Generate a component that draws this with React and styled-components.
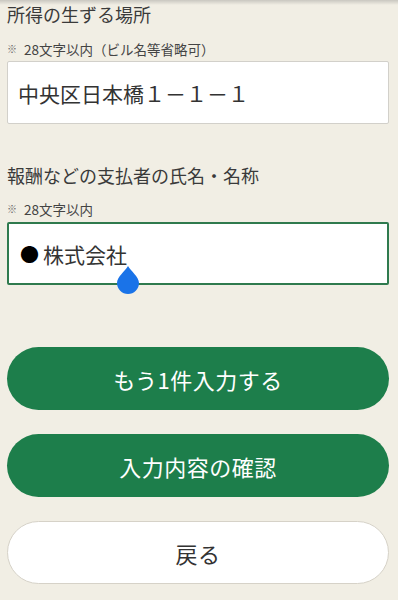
import React from "react";
import styled, { createGlobalStyle } from "styled-components";

const GlobalStyle = createGlobalStyle`
  html, body {
    margin: 0;
    padding: 0;
    background: #f1eee4;
  }
  body {
    font-family: "Noto Sans CJK JP", "Noto Sans", sans-serif;
    color: #333;
  }
`;

const Page = styled.div`
  position: relative;
  height: 600px;
  overflow: hidden;
  padding: 0 9px 0 7px;
  box-sizing: border-box;
  display: flex;
  flex-direction: column;
  background: #f1eee4;

  &::before {
    content: "";
    position: absolute;
    top: 0;
    left: 0;
    right: 0;
    height: 5px;
    background: linear-gradient(#c9c7c0, rgba(241, 238, 228, 0));
  }
`;

const Label = styled.div`
  font-size: 18px;
  line-height: 24px;
  color: #3a3a3a;
  margin-top: ${(p) => p.$top}px;
`;

const Note = styled.div`
  font-size: 13.5px;
  line-height: 16px;
  color: #444;
  margin-top: ${(p) => p.$top}px;
  display: flex;
  align-items: center;
  gap: 7px;
`;

const Mark = styled.span`
  font-size: 10px;
  color: #666;
`;

const Field = styled.div`
  position: relative;
  margin-top: ${(p) => p.$top}px;
  height: 63px;
  box-sizing: border-box;
  background: #fff;
  border: ${(p) => (p.$focused ? "2px solid #2f7a4e" : "1px solid #d2d0ca")};
  border-radius: 2px;
  display: flex;
  align-items: center;
  padding-left: ${(p) => (p.$focused ? 9 : 10)}px;
  font-size: 21px;
  color: #333;
`;

const Bullet = styled.span`
  color: #000;
  font-size: 19px;
  margin: 0 4px 0 2px;
`;

const Handle = styled.svg`
  position: absolute;
  left: 107px;
  top: 42px;
  width: 24px;
  height: 28px;
`;

const Buttons = styled.div`
  margin-top: 62px;
  display: flex;
  flex-direction: column;
  gap: 24px;
`;

const Button = styled.button`
  height: 63px;
  border-radius: 32px;
  font-family: inherit;
  font-size: 22px;
  letter-spacing: 0.5px;
  cursor: pointer;
  background: ${(p) => (p.$primary ? "#1d7e4b" : "#fff")};
  color: ${(p) => (p.$primary ? "#fff" : "#333")};
  border: ${(p) => (p.$primary ? "none" : "1px solid #d6d2c8")};
`;

export default function App() {
  return (
    <>
      <GlobalStyle />
      <Page>
        <Label $top={2}>所得の生ずる場所</Label>
        <Note $top={15}>
          <Mark>※</Mark>
          <span>28文字以内（ビル名等省略可）</span>
        </Note>
        <Field $top={4}>中央区日本橋１－１－１</Field>

        <Label $top={39}>報酬などの支払者の氏名・名称</Label>
        <Note $top={14}>
          <Mark>※</Mark>
          <span>28文字以内</span>
        </Note>
        <Field $top={5} $focused>
          <Bullet>●</Bullet>株式会社
          <Handle viewBox="0 0 24 28">
            <path d="M12 0 C15 5 23 11 23 17 A11 11 0 0 1 1 17 C1 11 9 5 12 0 Z" fill="#1a73e8" />
          </Handle>
        </Field>

        <Buttons>
          <Button $primary>もう1件入力する</Button>
          <Button $primary>入力内容の確認</Button>
          <Button>戻る</Button>
        </Buttons>
      </Page>
    </>
  );
}
